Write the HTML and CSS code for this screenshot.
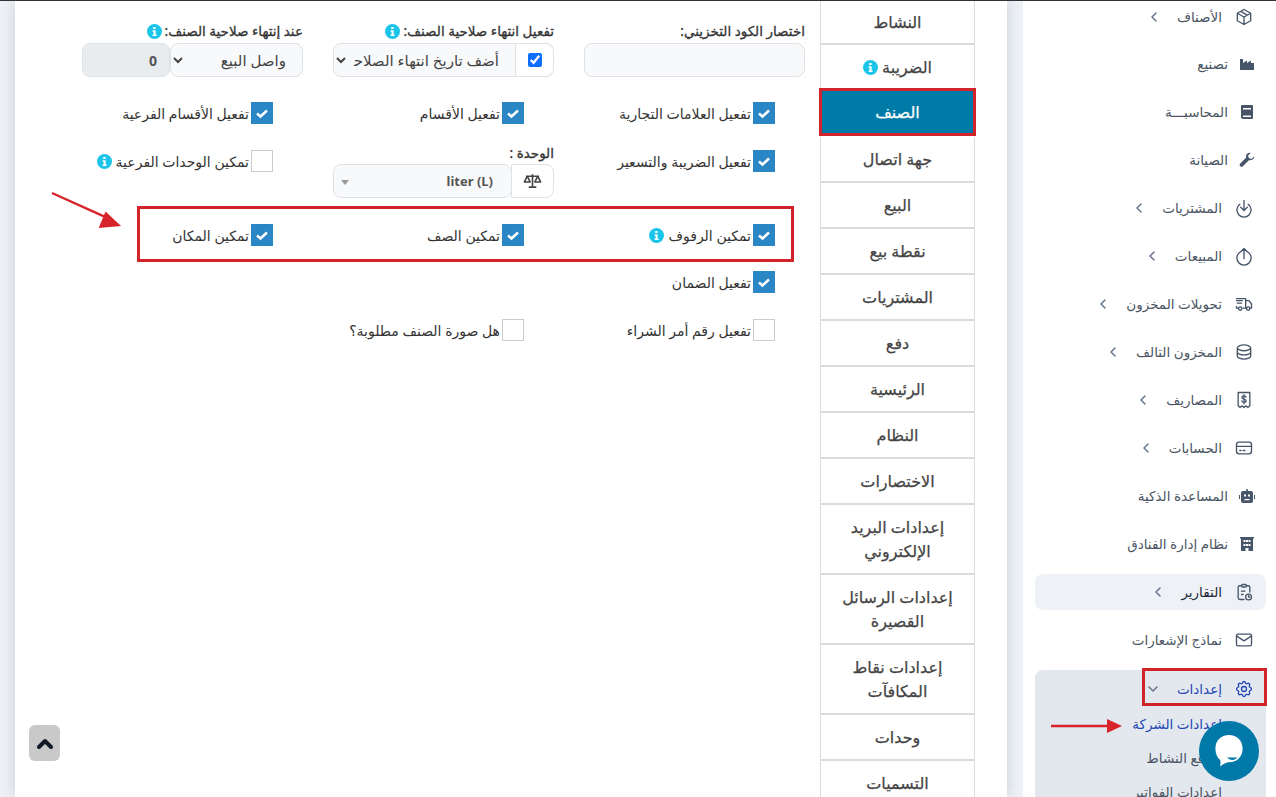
FILE: index.html
```html
<!DOCTYPE html>
<html lang="ar" dir="rtl">
<head>
<meta charset="utf-8">
<title>إعدادات الشركة</title>
<link rel="stylesheet" href="styles.css">
</head>
<body>
<div class="shell">
  <aside class="sidebar">
    <nav class="menu">
      <a class="item item-first"><svg class="ico" viewBox="0 0 24 24"><path d="M12 3l8 4.500v9L12 21l-8-4.500v-9L12 3M12 12l8-4.500M12 12v9M12 12L4 7.500M8 5.200l8 4.600"/></svg><span>الأصناف</span><svg class="chev" viewBox="0 0 10 12"><path d="M7 2L3 6l4 4"/></svg></a>
      <a class="item item-solid"><svg class="ico-solid" viewBox="0 0 16 16"><path d="M1 3h3v4l4-2.500V7l4-2.500V7h3v7H1z"/></svg><span>تصنيع</span></a>
      <a class="item item-solid"><svg class="ico-solid" viewBox="0 0 16 16"><path fill-rule="evenodd" d="M3 1h10a1 1 0 0 1 1 1v12a1 1 0 0 1-1 1H4a2 2 0 0 1-2-2V2a1 1 0 0 1 1-1zm1 3v1.500h8V4zm0 7.500V13h8v-1.500z"/></svg><span>المحاسبـــة</span></a>
      <a class="item item-solid"><svg class="ico-solid" viewBox="0 0 16 16"><path d="M15 4.500l-2.700 2.400-2.600-.8-.6-2.500L11.700.9C9.500.3 7.200 1.700 7 4c0 .6.100 1.100.2 1.600L1.300 11.500a1.800 1.800 0 0 0 2.600 2.700l6-6c2.800.8 5.600-1.400 5.100-3.700z"/></svg><span>الصيانة</span></a>
      <a class="item"><svg class="ico" viewBox="0 0 24 24"><path d="M12 3v12M8 11l4 4 4-4M7 7.500a8.500 8.500 0 1 0 10 0"/></svg><span>المشتريات</span><svg class="chev" viewBox="0 0 10 12"><path d="M7 2L3 6l4 4"/></svg></a>
      <a class="item"><svg class="ico" viewBox="0 0 24 24"><path d="M12 15V3M8 7l4-4 4 4M7 7.500a8.500 8.500 0 1 0 10 0"/></svg><span>المبيعات</span><svg class="chev" viewBox="0 0 10 12"><path d="M7 2L3 6l4 4"/></svg></a>
      <a class="item"><svg class="ico" viewBox="0 0 24 24"><path d="M3 8h7M4 11h5M3 5.500h11V17H11M14 8h4l3 4v5h-2M14 17h1M14 8v9M5 17H3v-2"/><circle cx="7.500" cy="17.500" r="2"/><circle cx="17" cy="17.500" r="2"/></svg><span>تحويلات المخزون</span><svg class="chev" viewBox="0 0 10 12"><path d="M7 2L3 6l4 4"/></svg></a>
      <a class="item"><svg class="ico" viewBox="0 0 24 24"><path d="M4 7c0-1.900 3.600-3.500 8-3.500s8 1.600 8 3.500v10c0 1.900-3.600 3.500-8 3.500S4 18.900 4 17zM4 12c0 1.900 3.600 3.500 8 3.500s8-1.600 8-3.500M4 7c0 1.900 3.600 3.500 8 3.500S20 8.900 20 7"/></svg><span>المخزون التالف</span><svg class="chev" viewBox="0 0 10 12"><path d="M7 2L3 6l4 4"/></svg></a>
      <a class="item"><svg class="ico" viewBox="0 0 24 24"><path d="M5 19V3h14v16l-2.300 2-2.400-2-2.300 2-2.300-2-2.400 2zM14.500 8.500c-.4-1-1.300-1.500-2.500-1.500-1.500 0-2.500.7-2.500 1.900 0 2.600 5 1.300 5 3.900 0 1.200-1 1.900-2.500 1.900-1.200 0-2.200-.6-2.600-1.600M12 5.500v11"/></svg><span>المصاريف</span><svg class="chev" viewBox="0 0 10 12"><path d="M7 2L3 6l4 4"/></svg></a>
      <a class="item"><svg class="ico" viewBox="0 0 24 24"><rect x="3" y="5" width="18" height="14" rx="3"/><path d="M3 10h18M7 15h1.500M11 15h2"/></svg><span>الحسابات</span><svg class="chev" viewBox="0 0 10 12"><path d="M7 2L3 6l4 4"/></svg></a>
      <a class="item item-solid"><svg class="ico-solid" viewBox="0 0 16 16"><path fill-rule="evenodd" d="M7.200 1h1.600v2H12a2 2 0 0 1 2 2v8a2 2 0 0 1-2 2H4a2 2 0 0 1-2-2V5a2 2 0 0 1 2-2h3.200zM5 6.500v2h2v-2zm4 0v2h2v-2zM5.500 11v1.300h5V11zM0 7h1v4H0zm15 0h1v4h-1z"/></svg><span>المساعدة الذكية</span></a>
      <a class="item item-solid"><svg class="ico-solid" viewBox="0 0 16 16"><path fill-rule="evenodd" d="M1 1h14v1.500h-1V15H9.500v-3h-3v3H2V2.500H1zm3.500 3v2h2V4zm5 0v2h2V4zM7 4v2h2V4zM4.500 8v2h2V8zm5 0v2h2V8zM7 8v2h2V8z"/></svg><span>نظام إدارة الفنادق</span></a>
      <a class="item item-hover"><svg class="ico" viewBox="0 0 24 24"><path d="M9 4.500H7a2 2 0 0 0-2 2V19a2 2 0 0 0 2 2h5M15 4.500h2a2 2 0 0 1 2 2V12M9 4.500A1.500 1.500 0 0 1 10.500 3h3A1.500 1.500 0 0 1 15 4.500 1.500 1.500 0 0 1 13.500 6h-3A1.500 1.500 0 0 1 9 4.500zM9 11h4M9 15h2"/><circle cx="17.500" cy="18" r="3.500"/><path d="M17.500 16.500V18h1.200"/></svg><span>التقارير</span><svg class="chev" viewBox="0 0 10 12"><path d="M7 2L3 6l4 4"/></svg></a>
      <a class="item"><svg class="ico" viewBox="0 0 24 24"><rect x="3" y="5" width="18" height="14" rx="2"/><path d="M3 7l9 6 9-6"/></svg><span>نماذج الإشعارات</span></a>
      <div class="group">
        <a class="item item-open"><svg class="ico" viewBox="0 0 24 24"><path d="M10.325 4.317c.426-1.756 2.924-1.756 3.350 0a1.724 1.724 0 0 0 2.573 1.066c1.543-.94 3.310.826 2.370 2.370a1.724 1.724 0 0 0 1.065 2.572c1.756.426 1.756 2.924 0 3.350a1.724 1.724 0 0 0-1.066 2.573c.94 1.543-.826 3.310-2.370 2.370a1.724 1.724 0 0 0-2.572 1.065c-.426 1.756-2.924 1.756-3.350 0a1.724 1.724 0 0 0-2.573-1.066c-1.543.94-3.310-.826-2.370-2.370a1.724 1.724 0 0 0-1.065-2.572c-1.756-.426-1.756-2.924 0-3.350a1.724 1.724 0 0 0 1.066-2.573c-.94-1.543.826-3.310 2.370-2.370 1 .608 2.296.07 2.572-1.065z"/><circle cx="12" cy="12" r="3"/></svg><span>إعدادات</span><svg class="chev chev-down" viewBox="0 0 12 10"><path d="M2 3l4 4 4-4"/></svg></a>
        <a class="sub sub-active">إعدادات الشركة</a>
        <a class="sub">مواقع النشاط</a>
        <a class="sub">إعدادات الفواتير</a>
      </div>
    </nav>
  </aside>

  <main class="card">
    <ul class="tabs">
      <li class="tab tab-first">النشاط</li>
      <li class="tab">الضريبة <svg class="info" viewBox="0 0 16 16"><circle cx="8" cy="8" r="8"/><path class="info-i" d="M6.600 3.200h2.600v2.200H6.600zM6 6.700h3.200v4.500h1v1.600H6v-1.600h1V8.300H6z"/></svg></li>
      <li class="tab tab-active">الصنف</li>
      <li class="tab">جهة اتصال</li>
      <li class="tab">البيع</li>
      <li class="tab">نقطة بيع</li>
      <li class="tab">المشتريات</li>
      <li class="tab">دفع</li>
      <li class="tab">الرئيسية</li>
      <li class="tab">النظام</li>
      <li class="tab">الاختصارات</li>
      <li class="tab tab-wide">إعدادات البريد الإلكتروني</li>
      <li class="tab tab-wide">إعدادات الرسائل القصيرة</li>
      <li class="tab tab-wide">إعدادات نقاط المكافآت</li>
      <li class="tab">وحدات</li>
      <li class="tab">التسميات</li>
    </ul>

    <form class="form">
      <div class="row row-fields">
        <div class="field">
          <label class="lbl">اختصار الكود التخزيني:</label>
          <input class="ctl ctl-full" type="text">
        </div>
        <div class="field">
          <label class="lbl">تفعيل انتهاء صلاحية الصنف: <svg class="info" viewBox="0 0 16 16"><circle cx="8" cy="8" r="8"/><path class="info-i" d="M6.600 3.200h2.600v2.200H6.600zM6 6.700h3.200v4.500h1v1.600H6v-1.600h1V8.300H6z"/></svg></label>
          <div class="group-ctl">
            <span class="addon"><input class="native-check" type="checkbox" checked></span>
            <select class="ctl ctl-select ctl-joined"><option>أضف تاريخ انتهاء الصلاحية</option></select>
          </div>
        </div>
        <div class="field">
          <label class="lbl">عند إنتهاء صلاحية الصنف: <svg class="info" viewBox="0 0 16 16"><circle cx="8" cy="8" r="8"/><path class="info-i" d="M6.600 3.200h2.600v2.200H6.600zM6 6.700h3.200v4.500h1v1.600H6v-1.600h1V8.300H6z"/></svg></label>
          <div class="group-ctl">
            <select class="ctl ctl-select ctl-stop"><option>واصل البيع</option></select>
            <input class="ctl ctl-num" type="text" value="0" disabled>
          </div>
        </div>
      </div>

      <div class="row row-a">
        <div class="chk"><span class="box on"><svg viewBox="0 0 22 22"><path d="M6 11.500l3.500 3L16 8.500"/></svg></span>تفعيل العلامات التجارية</div>
        <div class="chk"><span class="box on"><svg viewBox="0 0 22 22"><path d="M6 11.500l3.500 3L16 8.500"/></svg></span>تفعيل الأقسام</div>
        <div class="chk"><span class="box on"><svg viewBox="0 0 22 22"><path d="M6 11.500l3.500 3L16 8.500"/></svg></span>تفعيل الأقسام الفرعية</div>
      </div>

      <div class="row row-b">
        <div class="chk chk-low"><span class="box on"><svg viewBox="0 0 22 22"><path d="M6 11.500l3.500 3L16 8.500"/></svg></span>تفعيل الضريبة والتسعير</div>
        <div class="field">
          <label class="lbl lbl-unit">الوحدة :</label>
          <div class="group-ctl">
            <span class="addon addon-scale"><svg class="scale" viewBox="0 0 20 16"><path d="M10 1v13M6 14.500h8M3 3h14M4.500 3L1.500 9h6zM15.500 3l-3 6h6z"/></svg></span>
            <div class="fake-select"><bdi class="fake-value">liter (L)</bdi><span class="caret"></span></div>
          </div>
        </div>
        <div class="chk chk-low"><span class="box"></span>تمكين الوحدات الفرعية <svg class="info" viewBox="0 0 16 16"><circle cx="8" cy="8" r="8"/><path class="info-i" d="M6.600 3.200h2.600v2.200H6.600zM6 6.700h3.200v4.500h1v1.600H6v-1.600h1V8.300H6z"/></svg></div>
      </div>

      <div class="row row-c">
        <div class="chk"><span class="box on"><svg viewBox="0 0 22 22"><path d="M6 11.500l3.500 3L16 8.500"/></svg></span>تمكين الرفوف <svg class="info" viewBox="0 0 16 16"><circle cx="8" cy="8" r="8"/><path class="info-i" d="M6.600 3.200h2.600v2.200H6.600zM6 6.700h3.200v4.500h1v1.600H6v-1.600h1V8.300H6z"/></svg></div>
        <div class="chk"><span class="box on"><svg viewBox="0 0 22 22"><path d="M6 11.500l3.500 3L16 8.500"/></svg></span>تمكين الصف</div>
        <div class="chk"><span class="box on"><svg viewBox="0 0 22 22"><path d="M6 11.500l3.500 3L16 8.500"/></svg></span>تمكين المكان</div>
      </div>

      <div class="row row-d">
        <div class="chk"><span class="box on"><svg viewBox="0 0 22 22"><path d="M6 11.500l3.500 3L16 8.500"/></svg></span>تفعيل الضمان</div>
      </div>

      <div class="row row-e">
        <div class="chk"><span class="box"></span>تفعيل رقم أمر الشراء</div>
        <div class="chk"><span class="box"></span>هل صورة الصنف مطلوبة؟</div>
      </div>
    </form>

    <button class="to-top" type="button"><svg viewBox="0 0 16 12"><path d="M2 10l6-6 6 6"/></svg></button>
  </main>
</div>

<div class="mark mark-shelves"></div>
<div class="mark mark-settings"></div>
<svg class="arrow arrow-a" viewBox="0 0 74 40"><path class="arrow-line" d="M1 2l58 26"/><path class="arrow-head" d="M72 36L49 38 56 21z"/></svg>
<svg class="arrow arrow-b" viewBox="0 0 72 16"><path class="arrow-line" d="M0 8h58"/><path class="arrow-head" d="M71 8L56 15V1z"/></svg>

<button class="chat" type="button"><svg viewBox="0 0 32 36"><path class="chat-bubble" d="M16 1c8.500 0 14.500 6 14.500 14.500S24.500 30 16 30c-2 0-5.500 1.500-9.500 4.500.6-3 .6-5.500 0-6.800C3.500 25 1.500 20.500 1.500 15.500 1.500 7 7.500 1 16 1z"/><path class="chat-smile" d="M14 25h11c-2.500 3.500-8.500 3.500-11 0z"/></svg></button>
</body>
</html>
```

FILE: styles.css
```css
* { box-sizing: border-box; }
html, body { margin: 0; height: 797px; overflow: hidden; }
body {
  position: relative;
  background: #eef2f6;
  border-top: 1px solid #333;
  font-family: "Noto Sans", "DejaVu Sans", sans-serif;
  color: #333;
}
.shell { display: flex; height: 796px; gap: 16px; }

/* sidebar */
.sidebar { width: 253px; flex: none; background: #fff; overflow: hidden; padding: 0 10px 0 12px; }
.menu { display: flex; flex-direction: column; }
.item {
  display: flex; align-items: center; gap: 12px;
  height: 48px; padding: 0 12px 0 0;
  font-size: 13.5px; color: #4b5563;
}
.item-first { height: 39px; padding-bottom: 8px; }
.item-solid { gap: 11px; padding-right: 11px; }
.item-hover { height: 36px; margin: 6px 0; background: #eef1f6; border-radius: 8px; color: #1f2937; }
.ico { width: 20px; height: 20px; flex: none; fill: none; stroke: #475569; stroke-width: 1.600; stroke-linecap: round; stroke-linejoin: round; }
.ico-solid { width: 16px; height: 16px; flex: none; fill: #475569; }
.chev { width: 10px; height: 12px; margin-right: 6px; fill: none; stroke: #64748b; stroke-width: 1.500; stroke-linecap: round; stroke-linejoin: round; }
.chev-down { width: 12px; height: 10px; }
.group { background: #e3e8ef; border-radius: 8px 8px 0 0; margin-top: 6px; height: 140px; }
.item-open { height: 37px; color: #2447b5; }
.item-open .ico { stroke: #2447b5; }
.sub { display: block; height: 34px; line-height: 34px; padding-right: 44px; font-size: 13.5px; color: #4b5563; }
.sub-active { color: #2447b5; }

/* card */
.card {
  position: relative; flex: 1; display: flex; background: #fff;
  padding-right: 32px; margin-left: 15px;
  box-shadow: 0 0 14px rgba(100, 116, 139, .28);
  overflow: hidden;
}

/* tabs */
.tabs { list-style: none; margin: 0; padding: 0; width: 155px; flex: none; }
.tab {
  display: flex; align-items: center; justify-content: center; gap: 4px;
  height: 46px; padding: 0 8px;
  border: 1px solid #dcdcdc; border-top: 0; border-bottom-width: 2px;
  background: #fff; color: #444; font-size: 16px;
  -webkit-text-stroke: .25px #444;
  text-align: center; line-height: 24px;
}
.tab-first { height: 44px; }
.tab-active { background: #007ba7; color: #fff; -webkit-text-stroke: .25px #fff; border: 3px solid #d2232a; margin: -3px -1px 1px -1px; height: 48px; width: 157px; }
.tab-wide { height: 70px; }

/* form */
.form { flex: 1; padding: 0 15px 0 67px; min-width: 0; }
.row { display: grid; grid-template-columns: repeat(3, 221px); gap: 30px; }
.row-fields { padding-top: 18px; }
.row-a { margin-top: 25px; }
.row-b { margin-top: 17px; }
.row-c { margin-top: 26px; }
.row-d { margin-top: 25px; }
.row-e { margin-top: 26px; }
.field { display: flex; flex-direction: column; }
.lbl { display: flex; align-items: center; gap: 3px; height: 24px; font-size: 13.500px; color: #333; -webkit-text-stroke: .3px #333; }
.lbl-unit { height: 23px; }
.info { width: 15px; height: 15px; flex: none; fill: #1bc5ea; }
.info-i { fill: #fff; }
.ctl {
  height: 34px; border: 1px solid #dee2e6; border-radius: 8px;
  background: #f8f9fa; color: #444; font-family: inherit; font-size: 15px;
  outline: none;
}
.ctl-full { width: 100%; }
.group-ctl { display: flex; height: 34px; }
.addon {
  display: flex; align-items: center; justify-content: center; width: 38px; flex: none;
  border: 1px solid #dee2e6; border-left: 0; border-radius: 0 8px 8px 0; background: #fff;
}
.native-check { width: 14px; height: 14px; margin: 0; accent-color: #0d6efd; }
.ctl-select { flex: 1; min-width: 0; padding: 0 12px 0 4px; }
.ctl-joined { border-radius: 8px 0 0 8px; }
.ctl-stop { width: 133px; flex: none; }
.ctl-num { width: 88px; flex: none; background: #e9ecef; text-align: right; padding: 0 12px; font-size: 14px; font-weight: 700; color: #555; }
.addon-scale { width: 43px; border-left: 1px solid #dee2e6; margin-left: -1px; }
.scale { width: 19px; height: 16px; fill: none; stroke: #444; stroke-width: 1.700; stroke-linejoin: round; }
.fake-select {
  position: relative; flex: 1; display: flex; align-items: center;
  padding-right: 18px; border: 1px solid #dee2e6; border-radius: 8px; background: #f8f9fa;
  font-size: 13px; font-weight: 700; color: #555;
}
.caret { position: absolute; left: 7px; top: 15px; border: 4px solid transparent; border-top: 5px solid #999; border-bottom: 0; }

.chk { display: flex; align-items: center; gap: 2px; height: 22px; padding-right: 30px; font-size: 14px; color: #333; }
.chk .info { margin-right: 2px; }
.chk-low { margin-top: 9px; }
.box { width: 22px; height: 22px; flex: none; border: 1px solid #ccc; background: #fff; }
.box svg { display: block; width: 22px; height: 22px; fill: none; stroke: #fff; stroke-width: 2.500; }
.box.on { border: 0; background: #2b86c5; }

/* floating */
.to-top { position: absolute; left: 14px; top: 724px; width: 31px; height: 36px; padding: 0; border: 0; border-radius: 6px; background: #c9c9c9; display: flex; align-items: center; justify-content: center; }
.to-top svg { width: 16px; height: 12px; fill: none; stroke: #111827; stroke-width: 4; stroke-linecap: round; stroke-linejoin: round; }

.mark { position: absolute; border: 3px solid #d2232a; pointer-events: none; }
.mark-shelves { left: 137px; top: 205px; width: 657px; height: 56px; }
.mark-settings { left: 1142px; top: 667px; width: 125px; height: 38px; }
.arrow { position: absolute; pointer-events: none; overflow: visible; }
.arrow-a { left: 51px; top: 190px; width: 72px; height: 39px; }
.arrow-b { left: 1051px; top: 717px; width: 72px; height: 16px; }
.arrow-line { fill: none; stroke: #d9232a; stroke-width: 2.500; }
.arrow-head { fill: #d9232a; }
.chat { position: absolute; left: 1199px; top: 720px; width: 60px; height: 60px; padding: 0; border: 0; border-radius: 50%; background: #0079a8; display: flex; align-items: center; justify-content: center; }
.chat svg { width: 30px; height: 34px; }
.chat-bubble { fill: #fff; }
.chat-smile { fill: #0079a8; }
```
